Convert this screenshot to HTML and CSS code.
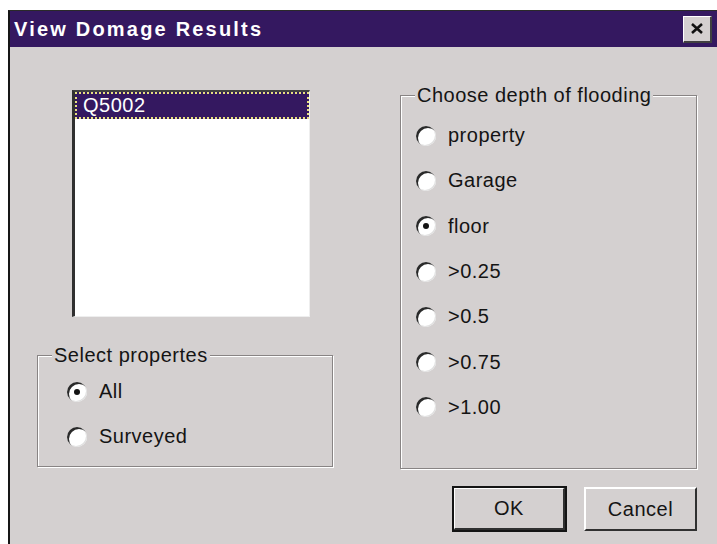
FILE: index.html
```html
<!DOCTYPE html>
<html>
<head>
<meta charset="utf-8">
<title>View Domage Results</title>
<link rel="stylesheet" href="styles.css">
</head>
<body>
<div class="window">
  <div class="titlebar">
    <span class="title">View Domage Results</span>
    <span class="close">
      <svg width="14" height="13" viewBox="0 0 14 13"><path d="M2 2 L12 11 M12 2 L2 11" stroke="#111" stroke-width="2.6"/></svg>
    </span>
  </div>
  <div class="client">
    <div class="col-left">
      <div class="listbox">
        <div class="item selected"><span class="focus">Q5002</span></div>
      </div>
      <fieldset class="group group-props">
        <legend>Select propertes</legend>
        <label class="radio"><span class="dot checked"></span>All</label>
        <label class="radio"><span class="dot"></span>Surveyed</label>
      </fieldset>
    </div>
    <div class="col-right">
      <fieldset class="group group-depth">
        <legend>Choose depth of flooding</legend>
        <label class="radio"><span class="dot"></span>property</label>
        <label class="radio"><span class="dot"></span>Garage</label>
        <label class="radio"><span class="dot checked"></span>floor</label>
        <label class="radio"><span class="dot"></span>&gt;0.25</label>
        <label class="radio"><span class="dot"></span>&gt;0.5</label>
        <label class="radio"><span class="dot"></span>&gt;0.75</label>
        <label class="radio"><span class="dot"></span>&gt;1.00</label>
      </fieldset>
      <div class="buttons">
        <button class="btn default">OK</button>
        <button class="btn">Cancel</button>
      </div>
    </div>
  </div>
</div>
</body>
</html>
```

FILE: styles.css
```css
html, body {
  margin: 0;
  padding: 0;
  background: #ffffff;
  width: 717px;
  height: 544px;
  overflow: hidden;
}

body {
  font-family: "Liberation Sans", Arial, sans-serif;
  color: #141414;
}

.window {
  margin: 10px 0 0 8px;
  border-left: 2px solid #161616;
  border-top: 1px solid #2a2a2a;
  height: 534px;
  background: #d4d0d0;
}

.titlebar {
  height: 36px;
  background: #341860;
  display: flex;
  align-items: center;
  justify-content: space-between;
  padding: 0 4px 0 4px;
}

.title {
  color: #ffffff;
  font-size: 20px;
  font-weight: bold;
  letter-spacing: 2.2px;
}

.close {
  width: 26px;
  height: 24px;
  background: #d4d0d0;
  border-top: 1px solid #ffffff;
  border-left: 1px solid #ffffff;
  border-right: 2px solid #404040;
  border-bottom: 2px solid #404040;
  display: flex;
  align-items: center;
  justify-content: center;
  margin-right: 1px;
}

.client {
  display: flex;
  padding: 0 0 0 27px;
  font-size: 20px;
  letter-spacing: 0.5px;
}

.col-left {
  width: 296px;
  padding-top: 43px;
}

.listbox {
  margin-left: 35px;
  width: 234px;
  height: 224px;
  background: #ffffff;
  border-top: 2px solid #404040;
  border-left: 3px solid #303030;
  border-right: 1px solid #eeeeee;
  border-bottom: 1px solid #eeeeee;
}

.item {
  height: 27px;
  display: flex;
  align-items: center;
}

.item.selected {
  background: #341860;
  color: #ffffff;
  outline: 2px dotted #e8e080;
  outline-offset: -2px;
}

.focus {
  padding-left: 8px;
}

.group {
  margin: 0;
  padding: 0;
  border: 1px solid #888484;
  box-shadow: inset 1px 1px 0 #ffffff, 1px 1px 0 #ffffff;
  min-width: 0;
}

.group legend {
  padding: 0 2px;
  margin-left: 14px;
  line-height: 20px;
  background: #d4d0d0;
}

.group-props {
  margin-top: 28px;
  width: 294px;
  height: 116px;
  padding-top: 4px;
}

.group-props .radio {
  margin-left: 29px;
  height: 45px;
}

.col-right {
  margin-left: 67px;
  width: 297px;
  padding-top: 38px;
}

.group-depth {
  width: 295px;
  height: 374px;
  padding-top: 8px;
}

.group-depth .radio {
  margin-left: 15px;
  height: 45.3px;
}

.radio {
  display: flex;
  align-items: center;
  gap: 12px;
}

.dot {
  width: 20px;
  height: 20px;
  border-radius: 50%;
  background: #ffffff;
  box-shadow: inset 2px 2px 0 #2a2a2a, inset -1px -1px 0 #e0e0e0;
  position: relative;
  flex: none;
}

.dot.checked::after {
  content: "";
  position: absolute;
  left: 7px;
  top: 7px;
  width: 6px;
  height: 6px;
  border-radius: 50%;
  background: #141414;
}

.buttons {
  display: flex;
  gap: 18px;
  margin-top: 18px;
  padding-left: 53px;
}

.btn {
  font-family: "Liberation Sans", Arial, sans-serif;
  font-size: 20px;
  letter-spacing: 0.5px;
  color: #141414;
  background: #d4d0d0;
  width: 114px;
  height: 44px;
  padding: 0;
  border-top: 2px solid #ffffff;
  border-left: 2px solid #ffffff;
  border-right: 2px solid #303030;
  border-bottom: 2px solid #303030;
}

.btn.default {
  outline: 2px solid #141414;
  outline-offset: -1px;
  border-right-width: 3px;
  border-bottom-width: 3px;
}
```
